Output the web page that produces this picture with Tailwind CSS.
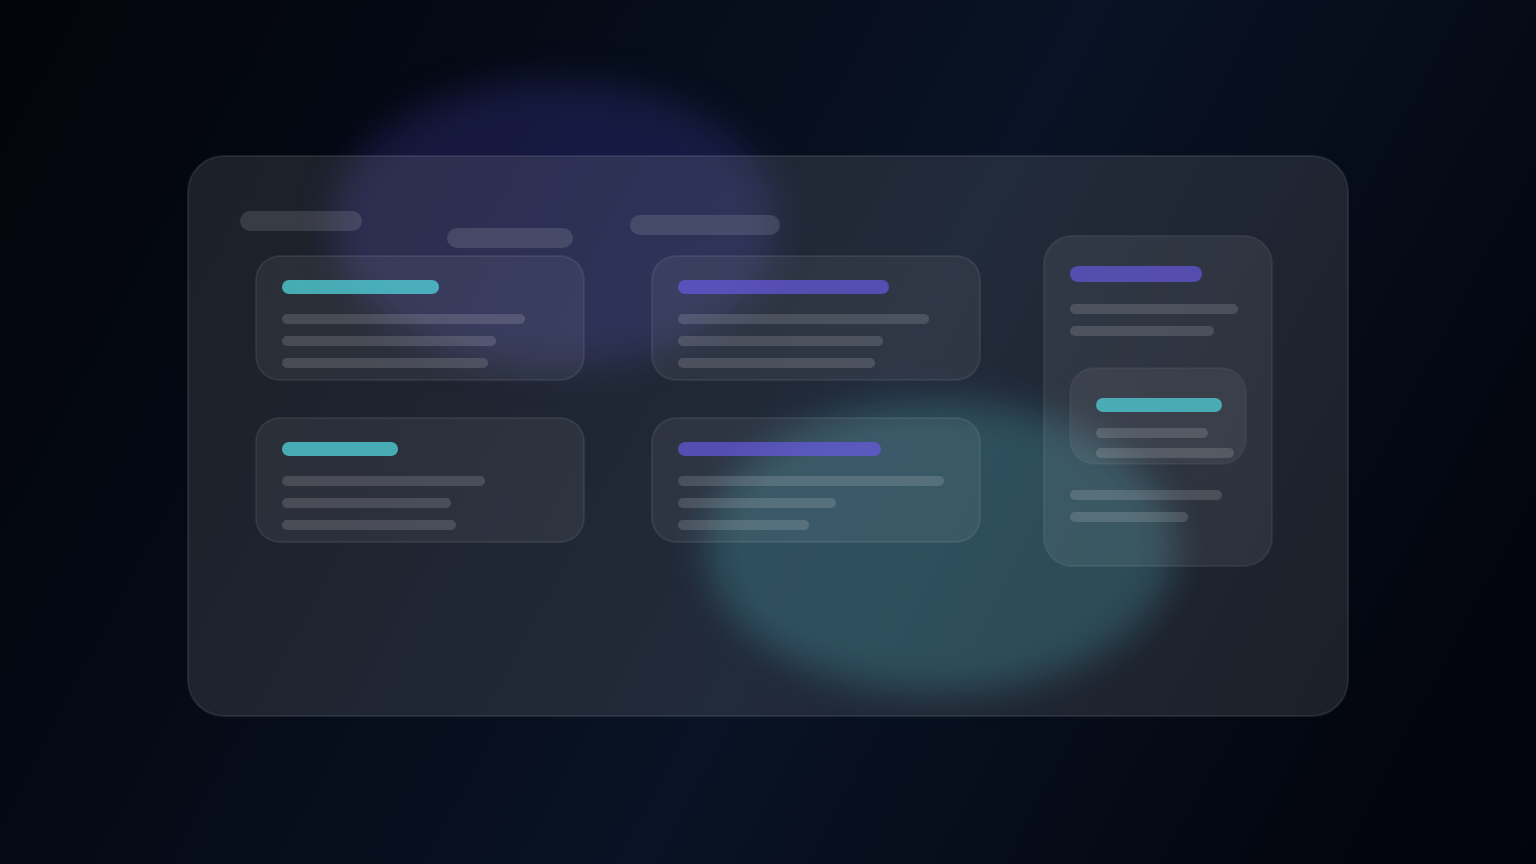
<!DOCTYPE html>
<html lang="en">
<head>
    <meta charset="UTF-8">
    <meta name="viewport" content="width=device-width, initial-scale=1.0">
    <title>Dashboard</title>
    <script src="https://cdn.jsdelivr.net/npm/@tailwindcss/browser@4"></script>
</head>
<body class="bg-[#02040a]">
    <main class="min-h-screen flex items-center justify-center overflow-hidden px-8 pt-2 bg-linear-[118deg,#03050b_0%,#040812_20%,#091325_55%,#03060f_88%,#02040c_100%]">
        <div class="relative w-full max-w-[1160px]">
            <!-- Background glows -->
            <div class="absolute left-[144px] -top-[76px] w-[446px] h-[288px] rounded-[50%] bg-[#5c52e0]/20 blur-[18px]"></div>
            <div class="absolute left-[518px] top-[245px] w-[468px] h-[292px] rounded-[50%] bg-[#4fd1e0]/22 blur-[18px]"></div>

            <!-- Glass panel -->
            <section class="relative flex gap-16 pl-[51px] pr-[75px] pt-[54px] pb-[149px] rounded-[36px] bg-white/10 border border-white/8 ring-1 ring-white/10">
                <div class="flex-1">
                    <!-- Header tabs -->
                    <div class="flex items-start h-[45px]">
                        <div class="w-[122px] h-5 rounded-full bg-white/12"></div>
                        <div class="w-[126px] h-5 rounded-full bg-white/12 ml-[85px] mt-[17px]"></div>
                        <div class="w-[150px] h-5 rounded-full bg-white/12 ml-[57px] mt-1"></div>
                    </div>

                    <!-- Cards -->
                    <div class="grid grid-cols-2 gap-x-[68px] gap-y-[38px] pl-4">
                        <article class="px-[25px] pt-[23px] pb-[11px] rounded-3xl bg-white/6 border border-white/7 ring-1 ring-white/7">
                            <div class="w-[157px] h-3.5 mb-5 rounded-full bg-[#4fd1d9]/77"></div>
                            <div class="space-y-3">
                                <div class="w-[243px] h-2.5 rounded-full bg-white/14"></div>
                                <div class="w-[214px] h-2.5 rounded-full bg-white/14"></div>
                                <div class="w-[206px] h-2.5 rounded-full bg-white/14"></div>
                            </div>
                        </article>
                        <article class="px-[25px] pt-[23px] pb-[11px] rounded-3xl bg-white/6 border border-white/7 ring-1 ring-white/7">
                            <div class="w-[211px] h-3.5 mb-5 rounded-full bg-[#685ae6]/68"></div>
                            <div class="space-y-3">
                                <div class="w-[251px] h-2.5 rounded-full bg-white/14"></div>
                                <div class="w-[205px] h-2.5 rounded-full bg-white/14"></div>
                                <div class="w-[197px] h-2.5 rounded-full bg-white/14"></div>
                            </div>
                        </article>
                        <article class="px-[25px] pt-[23px] pb-[11px] rounded-3xl bg-white/6 border border-white/7 ring-1 ring-white/7">
                            <div class="w-[116px] h-3.5 mb-5 rounded-full bg-[#4fd1d9]/77"></div>
                            <div class="space-y-3">
                                <div class="w-[203px] h-2.5 rounded-full bg-white/14"></div>
                                <div class="w-[169px] h-2.5 rounded-full bg-white/14"></div>
                                <div class="w-[174px] h-2.5 rounded-full bg-white/14"></div>
                            </div>
                        </article>
                        <article class="px-[25px] pt-[23px] pb-[11px] rounded-3xl bg-white/6 border border-white/7 ring-1 ring-white/7">
                            <div class="w-[203px] h-3.5 mb-5 rounded-full bg-[#685ae6]/68"></div>
                            <div class="space-y-3">
                                <div class="w-[266px] h-2.5 rounded-full bg-white/14"></div>
                                <div class="w-[158px] h-2.5 rounded-full bg-white/14"></div>
                                <div class="w-[131px] h-2.5 rounded-full bg-white/14"></div>
                            </div>
                        </article>
                    </div>
                </div>

                <!-- Sidebar -->
                <aside class="w-[228px] mt-[25px] px-[25px] pt-[29px] pb-[43px] rounded-[28px] bg-white/7 border border-white/6 ring-1 ring-white/7">
                    <div class="w-[132px] h-4 rounded-full bg-[#685ae6]/65"></div>
                    <div class="mt-[22px] space-y-3">
                        <div class="w-[168px] h-2.5 rounded-full bg-white/14"></div>
                        <div class="w-[144px] h-2.5 rounded-full bg-white/14"></div>
                    </div>
                    <div class="mt-8 px-[25px] pt-[29px] pb-[5px] rounded-3xl bg-white/6 border border-white/4 ring-1 ring-white/4">
                        <div class="w-[126px] h-3.5 mb-4 rounded-full bg-[#4fd1d9]/74"></div>
                        <div class="space-y-2.5">
                            <div class="w-[112px] h-2.5 rounded-full bg-white/14"></div>
                            <div class="w-[138px] h-2.5 rounded-full bg-white/14"></div>
                        </div>
                    </div>
                    <div class="mt-[26px] space-y-3">
                        <div class="w-[152px] h-2.5 rounded-full bg-white/14"></div>
                        <div class="w-[118px] h-2.5 rounded-full bg-white/14"></div>
                    </div>
                </aside>
            </section>
        </div>
    </main>
</body>
</html>
